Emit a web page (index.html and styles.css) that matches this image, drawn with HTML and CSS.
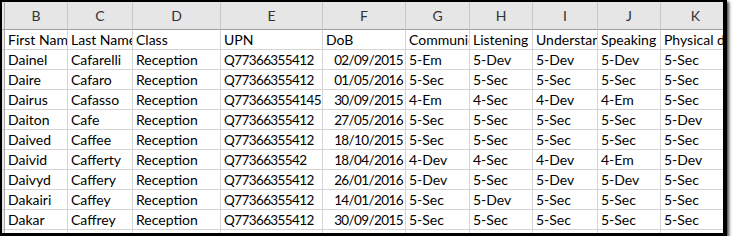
FILE: index.html
```html
<!DOCTYPE html>
<html>
<head>
<meta charset="utf-8">
<link rel="stylesheet" href="styles.css">
</head>
<body>
<div class="frame">
  <div class="sheet">
    <div class="hd sp"></div>
    <div class="hd">B</div><div class="hd">C</div><div class="hd">D</div><div class="hd">E</div><div class="hd">F</div><div class="hd">G</div><div class="hd">H</div><div class="hd">I</div><div class="hd">J</div><div class="hd">K</div>

    <div class="c sp"></div>
    <div class="c">First Name</div><div class="c">Last Name</div><div class="c">Class</div><div class="c">UPN</div><div class="c">DoB</div><div class="c">Communication and language</div><div class="c">Listening and attention</div><div class="c">Understanding</div><div class="c">Speaking</div><div class="c">Physical development</div>

    <div class="c sp"></div>
    <div class="c">Dainel</div><div class="c">Cafarelli</div><div class="c">Reception</div><div class="c n">Q77366355412</div><div class="c n r">02/09/2015</div><div class="c">5-Em</div><div class="c">5-Dev</div><div class="c">5-Dev</div><div class="c">5-Dev</div><div class="c">5-Sec</div>

    <div class="c sp"></div>
    <div class="c">Daire</div><div class="c">Cafaro</div><div class="c">Reception</div><div class="c n">Q77366355412</div><div class="c n r">01/05/2016</div><div class="c">5-Sec</div><div class="c">5-Sec</div><div class="c">5-Sec</div><div class="c">5-Sec</div><div class="c">5-Sec</div>

    <div class="c sp"></div>
    <div class="c">Dairus</div><div class="c">Cafasso</div><div class="c">Reception</div><div class="c n">Q773663554145</div><div class="c n r">30/09/2015</div><div class="c">4-Em</div><div class="c">4-Sec</div><div class="c">4-Dev</div><div class="c">4-Em</div><div class="c">5-Sec</div>

    <div class="c sp"></div>
    <div class="c">Daiton</div><div class="c">Cafe</div><div class="c">Reception</div><div class="c n">Q77366355412</div><div class="c n r">27/05/2016</div><div class="c">5-Sec</div><div class="c">5-Sec</div><div class="c">5-Sec</div><div class="c">5-Sec</div><div class="c">5-Dev</div>

    <div class="c sp"></div>
    <div class="c">Daived</div><div class="c">Caffee</div><div class="c">Reception</div><div class="c n">Q77366355412</div><div class="c n r">18/10/2015</div><div class="c">5-Sec</div><div class="c">5-Sec</div><div class="c">5-Sec</div><div class="c">5-Sec</div><div class="c">5-Sec</div>

    <div class="c sp"></div>
    <div class="c">Daivid</div><div class="c">Cafferty</div><div class="c">Reception</div><div class="c n">Q7736635542</div><div class="c n r">18/04/2016</div><div class="c">4-Dev</div><div class="c">4-Sec</div><div class="c">4-Dev</div><div class="c">4-Em</div><div class="c">5-Dev</div>

    <div class="c sp"></div>
    <div class="c">Daivyd</div><div class="c">Caffery</div><div class="c">Reception</div><div class="c n">Q77366355412</div><div class="c n r">26/01/2016</div><div class="c">5-Dev</div><div class="c">5-Sec</div><div class="c">5-Dev</div><div class="c">5-Dev</div><div class="c">5-Sec</div>

    <div class="c sp"></div>
    <div class="c">Dakairi</div><div class="c">Caffey</div><div class="c">Reception</div><div class="c n">Q77366355412</div><div class="c n r">14/01/2016</div><div class="c">5-Sec</div><div class="c">5-Dev</div><div class="c">5-Sec</div><div class="c">5-Sec</div><div class="c">5-Sec</div>

    <div class="c sp"></div>
    <div class="c">Dakar</div><div class="c">Caffrey</div><div class="c">Reception</div><div class="c n">Q77366355412</div><div class="c n r">30/09/2015</div><div class="c">5-Sec</div><div class="c">5-Sec</div><div class="c">5-Sec</div><div class="c">5-Sec</div><div class="c">5-Sec</div>

    <div class="c sp"></div>
    <div class="c"></div><div class="c"></div><div class="c"></div><div class="c"></div><div class="c"></div><div class="c"></div><div class="c"></div><div class="c"></div><div class="c"></div><div class="c"></div>
  </div>
</div>
</body>
</html>
```

FILE: styles.css
```css
html, body {
  margin: 0;
  padding: 0;
  background: #ffffff;
}
.frame {
  width: 721px;
  height: 231px;
  border-style: solid;
  border-color: #000;
  border-width: 2px 4px 3px 2px;
  box-shadow: 2px 2px 3px rgba(0, 0, 0, 0.75);
  overflow: hidden;
  background: #fff;
}
.sheet {
  display: grid;
  grid-template-columns: 3px 63px 65px 88px 102px 83px 64px 63px 65px 63px 70px;
  grid-template-rows: 28px repeat(10, 20px) 20px;
  font-family: Lato, "Open Sans", sans-serif;
  font-size: 14px;
  color: #000;
}
.hd {
  box-sizing: border-box;
  background: #e6e6e6;
  border-right: 1px solid #c8c8c8;
  border-bottom: 1px solid #9e9e9e;
  color: #333;
  text-align: center;
  line-height: 26px;
  padding-top: 1px;
}
.hd.sp {
  border-right: 1px solid #ababab;
}
.c {
  box-sizing: border-box;
  border-right: 1px solid #d4d4d4;
  border-bottom: 1px solid #d4d4d4;
  padding: 0 3px;
  white-space: nowrap;
  overflow: hidden;
  line-height: 20px;
}
.c.n {
  font-size: 13.5px;
  letter-spacing: -0.6px;
}
.c.sp {
  background: #e6e6e6;
  border-right: 1px solid #ababab;
  border-bottom: 1px solid #c8c8c8;
  padding: 0;
}
.c.r {
  text-align: right;
  padding-right: 2px;
}
```
